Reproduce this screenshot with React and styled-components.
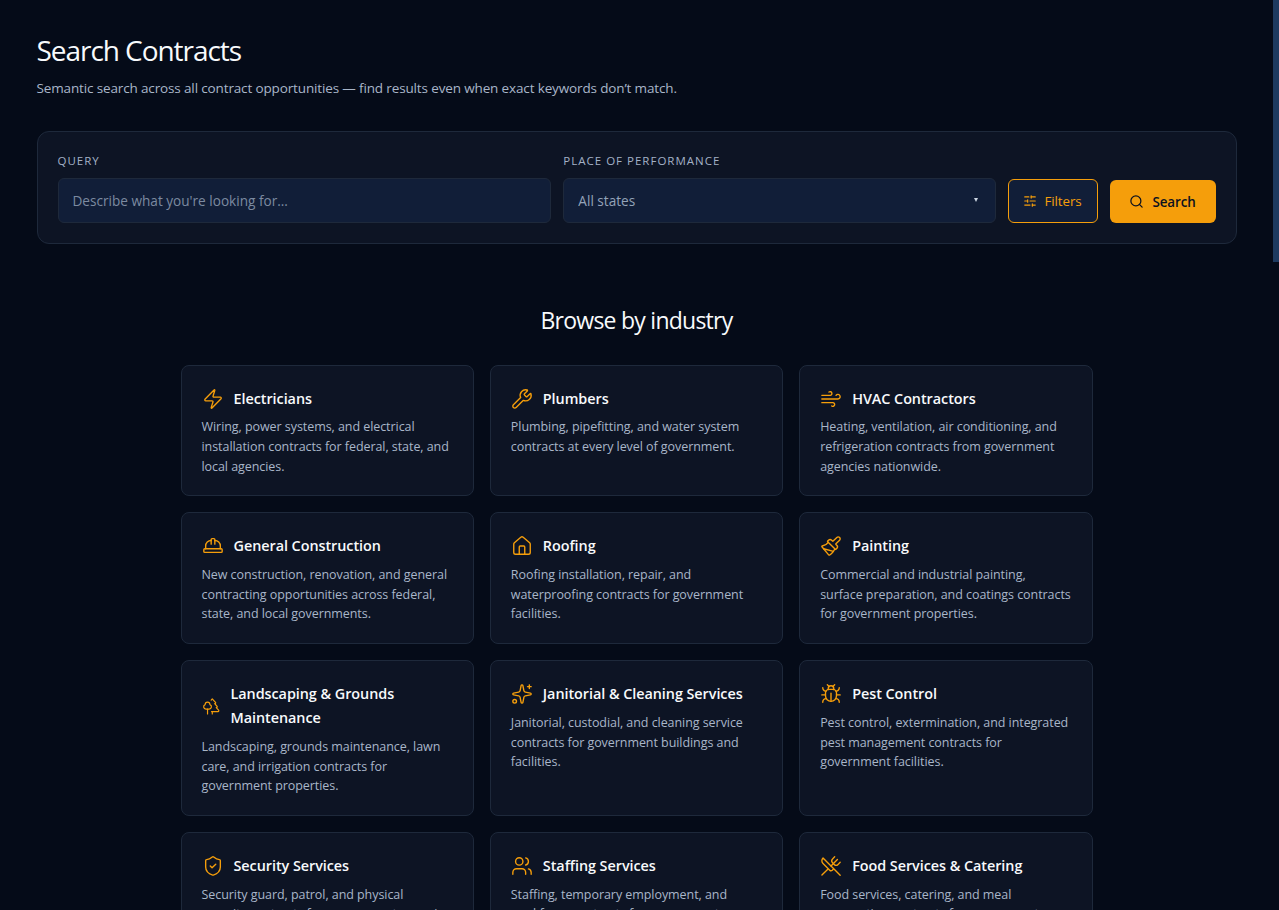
import React from "react";
import styled, { createGlobalStyle } from "styled-components";
import {
  Zap,
  Wrench,
  Wind,
  HardHat,
  House,
  Paintbrush,
  Trees,
  Sparkles,
  Bug,
  ShieldCheck,
  Users,
  UtensilsCrossed,
  SlidersHorizontal,
  Search,
} from "lucide-react";

const amber = "#f59e0b";

const GlobalStyle = createGlobalStyle`
  html, body {
    margin: 0;
    padding: 0;
    height: 100%;
    overflow: hidden;
    background: #050b18;
  }
  body {
    font-family: "Open Sans", "Noto Sans", sans-serif;
    color: #f8fafc;
  }
  * { box-sizing: border-box; }
`;

const Shell = styled.div`
  display: flex;
  height: 100vh;
`;

const Scroller = styled.div`
  flex: 1;
  min-width: 0;
  overflow: hidden;
`;

const ScrollRail = styled.div`
  flex: none;
  width: 6px;
  background: #050b18;
`;

const ScrollThumb = styled.div`
  height: 262px;
  background: #1e3a5f;
`;

const Page = styled.main`
  padding: 31px 36.5px 48px;
`;

const Title = styled.h1`
  margin: 0;
  font-size: 28px;
  font-weight: 400;
  line-height: 38px;
  letter-spacing: -1.05px;
  color: #f8fafc;
`;

const Subtitle = styled.p`
  margin: 9px 0 0;
  font-size: 13.5px;
  line-height: 20px;
  letter-spacing: -0.14px;
  color: #a9b6c9;
`;

const SearchPanel = styled.form`
  display: flex;
  align-items: flex-end;
  gap: 12px;
  margin-top: 33px;
  padding: 20px;
  height: 113px;
  background: #0d1424;
  border: 1px solid #1e293b;
  border-radius: 12px;
`;

const Field = styled.label`
  display: flex;
  flex-direction: column;
  gap: 10px;
  flex: ${(props) => props.$grow} 1 0;
  min-width: 0;
`;

const FieldLabel = styled.span`
  font-size: 11.5px;
  line-height: 15px;
  letter-spacing: 1px;
  text-transform: uppercase;
  color: #a3b1c6;
`;

const inputStyles = `
  width: 100%;
  height: 45px;
  padding: 0 14px;
  font: inherit;
  font-size: 13.6px;
  background: #111e38;
  border: 1px solid #1e293b;
  border-radius: 6px;
  outline: none;
`;

const TextInput = styled.input`
  ${inputStyles}
  color: #f8fafc;
  &::placeholder {
    color: #7c8aa0;
    opacity: 1;
  }
`;

const SelectWrap = styled.div`
  position: relative;
`;

const StateSelect = styled.select`
  ${inputStyles}
  appearance: none;
  color: #94a3b8;
`;

const SelectArrow = styled.span`
  position: absolute;
  top: 20px;
  right: 18px;
  width: 0;
  height: 0;
  border-left: 2.5px solid transparent;
  border-right: 2.5px solid transparent;
  border-top: 4px solid #cbd5e1;
  pointer-events: none;
`;

const Button = styled.button`
  display: inline-flex;
  align-items: center;
  justify-content: center;
  flex: none;
  font: inherit;
  font-size: 13.4px;
  letter-spacing: -0.1px;
  cursor: pointer;
`;

const FilterButton = styled(Button)`
  gap: 7px;
  width: 90px;
  height: 44px;
  color: ${amber};
  background: #111e38;
  border: 1px solid ${amber};
  border-radius: 6px;
`;

const SearchButton = styled(Button)`
  gap: 8px;
  width: 106px;
  height: 43px;
  font-weight: 600;
  color: #0b1120;
  background: ${amber};
  border: 0;
  border-radius: 6px;
`;

const BrowseTitle = styled.h2`
  margin: 59.5px 0 0;
  font-size: 23px;
  font-weight: 400;
  line-height: 32px;
  letter-spacing: -0.75px;
  text-align: center;
  color: #f8fafc;
`;

const Grid = styled.section`
  display: grid;
  grid-template-columns: repeat(3, 1fr);
  gap: 16px;
  max-width: 912px;
  margin: 29px auto 0;
`;

const Card = styled.article`
  padding: 21px 20px 19px;
  background: #0d1424;
  border: 1px solid #1e293b;
  border-radius: 8px;
`;

const CardHead = styled.div`
  display: flex;
  align-items: center;
  gap: 10px;
  margin-bottom: 6.5px;
  color: ${amber};
`;

const CardTitle = styled.h3`
  margin: 0;
  font-size: 14.4px;
  font-weight: 600;
  line-height: 24px;
  letter-spacing: -0.05px;
  color: #f8fafc;
`;

const CardText = styled.p`
  margin: 0;
  font-size: 12.5px;
  line-height: 19.8px;
  letter-spacing: -0.06px;
  white-space: pre-line;
  color: #a9b6c9;
`;

const industries = [
  { icon: Zap, name: "Electricians", text: "Wiring, power systems, and electrical installation contracts for federal, state, and local agencies." },
  { icon: Wrench, name: "Plumbers", text: "Plumbing, pipefitting, and water system contracts at every level of government." },
  { icon: Wind, name: "HVAC Contractors", text: "Heating, ventilation, air conditioning, and refrigeration contracts from government agencies nationwide." },
  { icon: HardHat, name: "General Construction", text: "New construction, renovation, and general contracting opportunities across federal, state, and local governments." },
  { icon: House, name: "Roofing", text: "Roofing installation, repair, and waterproofing contracts for government facilities." },
  { icon: Paintbrush, name: "Painting", text: "Commercial and industrial painting,\nsurface preparation, and coatings contracts for government properties." },
  { icon: Trees, name: "Landscaping & Grounds Maintenance", text: "Landscaping, grounds maintenance, lawn care, and irrigation contracts for government properties." },
  { icon: Sparkles, name: "Janitorial & Cleaning Services", text: "Janitorial, custodial, and cleaning service contracts for government buildings and facilities." },
  { icon: Bug, name: "Pest Control", text: "Pest control, extermination, and integrated pest management contracts for government facilities." },
  { icon: ShieldCheck, name: "Security Services", text: "Security guard, patrol, and physical\nsecurity contracts for government agencies and facilities." },
  { icon: Users, name: "Staffing Services", text: "Staffing, temporary employment, and workforce contracts for government agencies." },
  { icon: UtensilsCrossed, name: "Food Services & Catering", text: "Food services, catering, and meal preparation contracts for government agencies." },
];

const App = () => (
  <>
    <GlobalStyle />
    <Shell>
      <Scroller>
        <Page>
          <Title>Search Contracts</Title>
          <Subtitle>
            Semantic search across all contract opportunities — find results even when exact keywords don’t match.
          </Subtitle>
          <SearchPanel onSubmit={(e) => e.preventDefault()}>
            <Field $grow={8}>
              <FieldLabel>Query</FieldLabel>
              <TextInput placeholder="Describe what you're looking for..." />
            </Field>
            <Field $grow={7}>
              <FieldLabel>Place of performance</FieldLabel>
              <SelectWrap>
                <StateSelect defaultValue="">
                  <option value="">All states</option>
                </StateSelect>
                <SelectArrow />
              </SelectWrap>
            </Field>
            <FilterButton type="button">
              <SlidersHorizontal size={14} />
              Filters
            </FilterButton>
            <SearchButton type="submit">
              <Search size={15} />
              Search
            </SearchButton>
          </SearchPanel>
          <BrowseTitle>Browse by industry</BrowseTitle>
          <Grid>
            {industries.map(({ icon: Icon, name, text }) => (
              <Card key={name}>
                <CardHead>
                  <Icon size={22} strokeWidth={1.5} />
                  <CardTitle>{name}</CardTitle>
                </CardHead>
                <CardText>{text}</CardText>
              </Card>
            ))}
          </Grid>
        </Page>
      </Scroller>
      <ScrollRail>
        <ScrollThumb />
      </ScrollRail>
    </Shell>
  </>
);

export default App;
